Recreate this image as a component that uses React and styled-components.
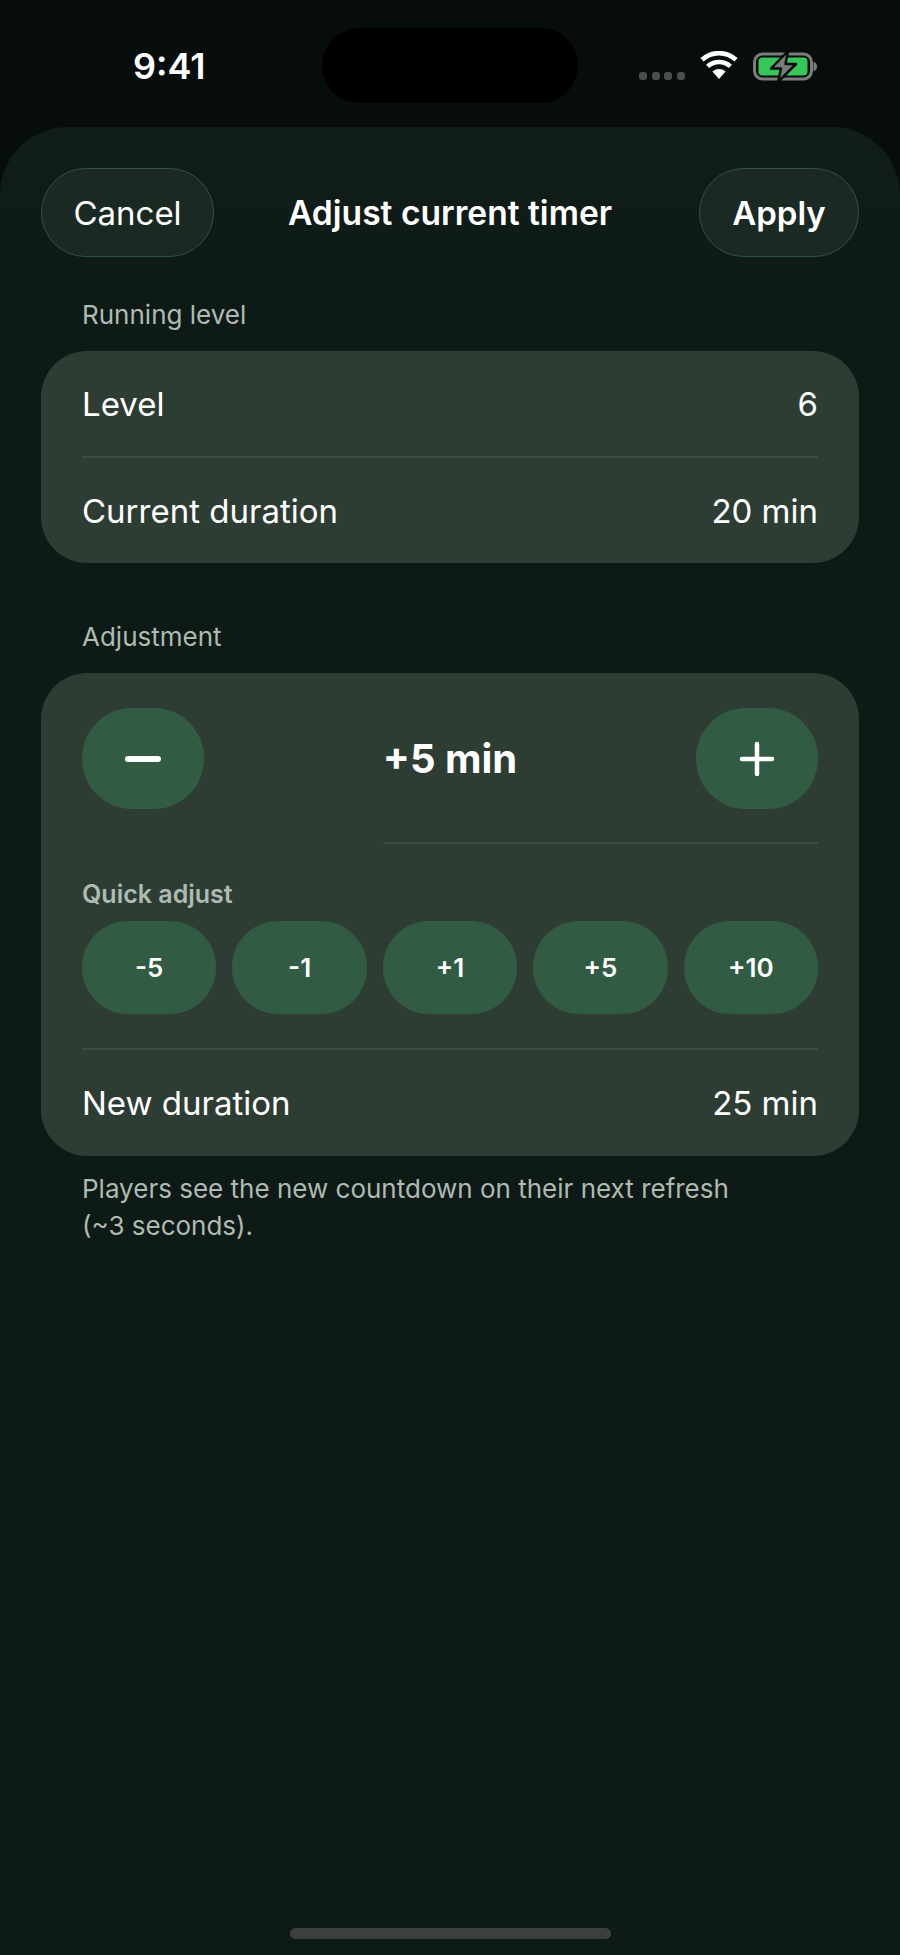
import styled, { createGlobalStyle } from "styled-components";

const GlobalStyle = createGlobalStyle`
  html, body {
    margin: 0;
    padding: 0;
    background: #0e1a15;
  }
  * {
    box-sizing: border-box;
  }
`;

const quickValues = ["-5", "-1", "+1", "+5", "+10"];

const App = () => {
  return (
    <Page>
      <GlobalStyle />
      <StatusBar>
        <Time>9:41</Time>
        <Island />
        <StatusIcons>
          <SignalDots>
            <Dot />
            <Dot />
            <Dot />
            <Dot />
          </SignalDots>
          <WifiIcon />
          <BatteryIcon />
        </StatusIcons>
      </StatusBar>

      <Sheet>
        <Header>
          <HeaderButton $width={173}>Cancel</HeaderButton>
          <Title>Adjust current timer</Title>
          <HeaderButton $width={160} $strong $end>
            Apply
          </HeaderButton>
        </Header>

        <SectionLabel>Running level</SectionLabel>
        <Card>
          <Row $height={105}>
            <span>Level</span>
            <span>6</span>
          </Row>
          <Divider />
          <Row $height={105}>
            <span>Current duration</span>
            <span>20 min</span>
          </Row>
        </Card>

        <SectionLabel $top={54}>Adjustment</SectionLabel>
        <Card>
          <Stepper>
            <StepButton aria-label="Decrease">
              <svg width="36" height="36" viewBox="0 0 36 36">
                <line x1="3" y1="18" x2="33" y2="18" stroke="#fff" strokeWidth="6" strokeLinecap="round" />
              </svg>
            </StepButton>
            <StepValue>+5 min</StepValue>
            <StepButton aria-label="Increase">
              <svg width="36" height="36" viewBox="0 0 36 36">
                <path d="M3 18H33M18 3V33" stroke="#fff" strokeWidth="4.5" strokeLinecap="round" fill="none" />
              </svg>
            </StepButton>
          </Stepper>
          <ShortDivider />
          <QuickLabel>Quick adjust</QuickLabel>
          <QuickGrid>
            {quickValues.map((value) => (
              <QuickChip key={value}>{value}</QuickChip>
            ))}
          </QuickGrid>
          <Divider />
          <Row $height={106}>
            <span>New duration</span>
            <span>25 min</span>
          </Row>
        </Card>

        <Note>
          Players see the new countdown on their next refresh
          <br />
          (~3 seconds).
        </Note>

        <HomeIndicator />
      </Sheet>
    </Page>
  );
};

const WifiIcon = () => (
  <svg width="38" height="28" viewBox="0 0 38 28">
    <path d="M19 28 L12.4 20.6 A10 10 0 0 1 25.6 20.6 Z" fill="#fff" />
    <path d="M7.6 15.4 A16.8 16.8 0 0 1 30.4 15.4" stroke="#fff" strokeWidth="4.6" fill="none" />
    <path d="M2 8.8 A25 25 0 0 1 36 8.8" stroke="#fff" strokeWidth="4.6" fill="none" />
  </svg>
);

const BatteryIcon = () => (
  <svg width="65" height="31" viewBox="0 0 65 31">
    <rect x="1.5" y="3" width="57" height="25" rx="8" fill="none" stroke="#7a7d7b" strokeWidth="3" />
    <rect x="5.5" y="6.5" width="49" height="18" rx="4" fill="#35c759" />
    <path d="M60.5 11 C63 11.5 64 13 64 15.5 C64 18 63 19.5 60.5 20 Z" fill="#7a7d7b" />
    <path
      d="M35 0 L18 17.5 H28 L25 31 L43 13 H32.5 Z"
      fill="#7a7d7b"
      stroke="#060d0a"
      strokeWidth="2.5"
      strokeLinejoin="round"
    />
  </svg>
);

export default App;

const Page = styled.div`
  width: 900px;
  height: 1955px;
  display: flex;
  flex-direction: column;
  overflow: hidden;
  background: #060d0a;
  font-family: Inter, "Liberation Sans", sans-serif;
  color: #fff;
`;

const StatusBar = styled.div`
  height: 127px;
  flex: none;
  display: grid;
  grid-template-columns: 322px 256px 322px;
  align-items: start;
`;

const Time = styled.div`
  padding: 44px 0 0 133px;
  font-size: 36px;
  line-height: 44px;
  font-weight: 600;
`;

const Island = styled.div`
  height: 75px;
  margin-top: 28px;
  border-radius: 38px;
  background: #000;
`;

const StatusIcons = styled.div`
  display: flex;
  align-items: flex-start;
  padding: 51px 0 0 61px;

  svg + svg {
    margin-left: 15px;
  }
`;

const SignalDots = styled.div`
  display: flex;
  gap: 4.5px;
  margin-top: 21px;
  margin-right: 15px;
`;

const Dot = styled.div`
  width: 8px;
  height: 8px;
  border-radius: 3px;
  background: #4a4e4c;
`;

const Sheet = styled.div`
  flex: 1;
  display: flex;
  flex-direction: column;
  padding: 41px 41px 16px;
  border-radius: 68px 68px 0 0;
  background: linear-gradient(180deg, #101d18 0, #0e1a15 180px);
`;

const Header = styled.div`
  display: grid;
  grid-template-columns: 1fr auto 1fr;
  align-items: center;
  height: 89px;
`;

const HeaderButton = styled.button`
  width: ${(p) => p.$width}px;
  height: 89px;
  padding: 0;
  justify-self: ${(p) => (p.$end ? "end" : "start")};
  border: 1.5px solid #305245;
  border-radius: 45px;
  background: #1a2922;
  color: #fff;
  font-family: inherit;
  font-size: 33px;
  font-weight: ${(p) => (p.$strong ? 600 : 400)};
`;

const Title = styled.div`
  font-size: 33.6px;
  font-weight: 600;
`;

const SectionLabel = styled.div`
  margin: ${(p) => p.$top || 38}px 0 0 41px;
  height: 40px;
  font-size: 26px;
  line-height: 40px;
  color: #aebbb2;
`;

const Card = styled.div`
  margin-top: 16px;
  padding: 0 41px;
  border-radius: 46px;
  background: #2e3d34;
`;

const Row = styled.div`
  height: ${(p) => p.$height}px;
  display: flex;
  align-items: center;
  justify-content: space-between;
  font-size: 33px;
`;

const Divider = styled.div`
  height: 2px;
  background: #3d4d43;
`;

const Stepper = styled.div`
  display: flex;
  align-items: center;
  justify-content: space-between;
  padding-top: 35px;
`;

const StepButton = styled.button`
  width: 122px;
  height: 101px;
  padding: 0;
  display: grid;
  place-items: center;
  border: none;
  border-radius: 50px;
  background: #325b44;
`;

const StepValue = styled.div`
  font-size: 40px;
  font-weight: 700;
`;

const ShortDivider = styled.div`
  height: 2px;
  margin: 33px 0 0 301px;
  background: #3d4d43;
`;

const QuickLabel = styled.div`
  margin-top: 35px;
  height: 30px;
  font-size: 25px;
  line-height: 30px;
  font-weight: 600;
  color: #aebbb2;
`;

const QuickGrid = styled.div`
  display: grid;
  grid-template-columns: repeat(5, 1fr);
  gap: 16px;
  margin-top: 12px;
  margin-bottom: 34px;
`;

const QuickChip = styled.button`
  height: 93px;
  padding: 0;
  border: none;
  border-radius: 46px;
  background: #325b44;
  color: #fff;
  font-family: inherit;
  font-size: 26px;
  font-weight: 600;
`;

const Note = styled.div`
  margin: 14px 0 0 41px;
  font-size: 26px;
  line-height: 37px;
  color: #aebbb2;
`;

const HomeIndicator = styled.div`
  flex: none;
  align-self: center;
  width: 321px;
  height: 11px;
  margin-top: auto;
  border-radius: 6px;
  background: #3b403c;
`;
